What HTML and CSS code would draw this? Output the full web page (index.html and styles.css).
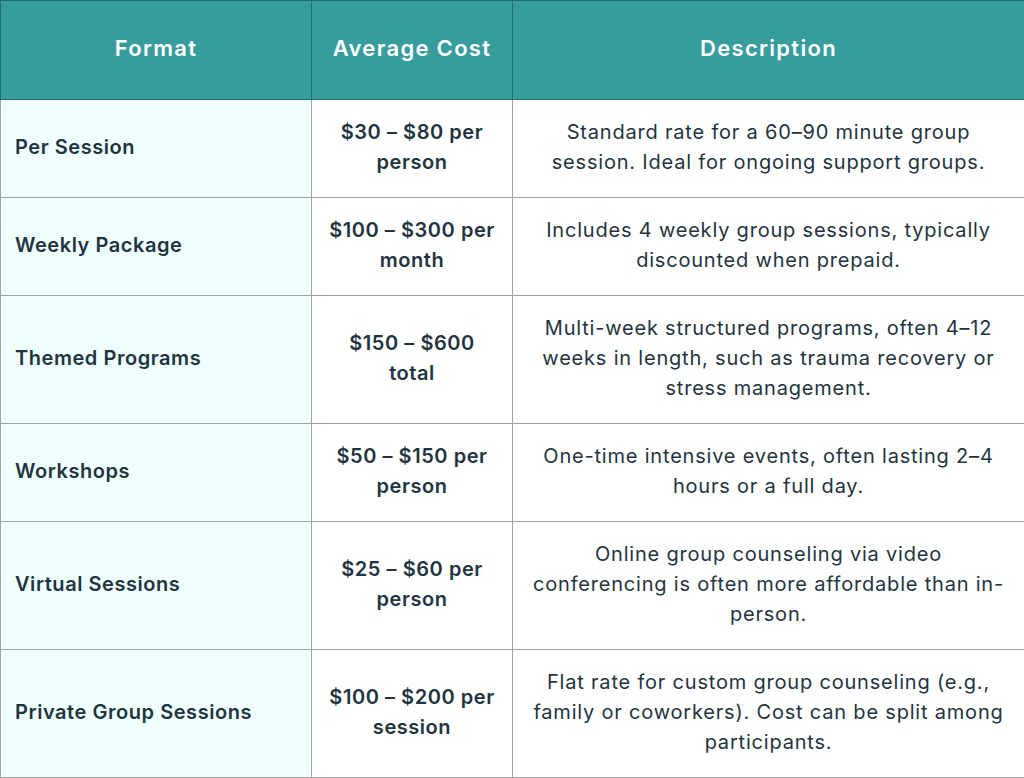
FILE: index.html
```html
<!DOCTYPE html>
<html>
<head>
<meta charset="utf-8">
<link rel="stylesheet" href="styles.css">
</head>
<body>
<table class="cost-table">
  <colgroup>
    <col class="c1"><col class="c2"><col class="c3">
  </colgroup>
  <thead>
    <tr><th>Format</th><th>Average Cost</th><th>Description</th></tr>
  </thead>
  <tbody>
    <tr class="r2"><td class="fmt">Per Session</td><td class="cost">$30 – $80 per person</td><td class="desc">Standard rate for a 60–90 minute group session. Ideal for ongoing support groups.</td></tr>
    <tr class="r2"><td class="fmt">Weekly Package</td><td class="cost">$100 – $300 per month</td><td class="desc">Includes 4 weekly group sessions, typically discounted when prepaid.</td></tr>
    <tr class="r3"><td class="fmt">Themed Programs</td><td class="cost">$150 – $600 total</td><td class="desc">Multi-week structured programs, often 4–12 weeks in length, such as trauma recovery or stress management.</td></tr>
    <tr class="r2"><td class="fmt">Workshops</td><td class="cost">$50 – $150 per person</td><td class="desc">One-time intensive events, often lasting 2–4 hours or a full day.</td></tr>
    <tr class="r3"><td class="fmt">Virtual Sessions</td><td class="cost">$25 – $60 per person</td><td class="desc">Online group counseling via video conferencing is often more affordable than in-person.</td></tr>
    <tr class="r3"><td class="fmt">Private Group Sessions</td><td class="cost">$100 – $200 per session</td><td class="desc">Flat rate for custom group counseling (e.g., family or coworkers). Cost can be split among participants.</td></tr>
  </tbody>
</table>
</body>
</html>
```
FILE: styles.css
```css
html, body {
  margin: 0;
  padding: 0;
  background: #ffffff;
}
.cost-table {
  width: 1024px;
  border-collapse: collapse;
  table-layout: fixed;
  font-family: "Inter", "Liberation Sans", sans-serif;
  font-size: 20px;
  letter-spacing: 0.55px;
  line-height: 30px;
  color: #1f3440;
}
.c1 { width: 311px; }
.c2 { width: 201px; }
.c3 { width: 512px; }
.cost-table th {
  background: #379c9c;
  color: #ffffff;
  font-weight: 600;
  font-size: 22px;
  letter-spacing: 1.3px;
  height: 94px;
  padding: 0 14px 4px;
  border: 1px solid #2a6a6a;
  text-align: center;
  vertical-align: middle;
}
.cost-table td {
  border: 1px solid #a3a3a3;
  padding: 0 14px 3px;
  vertical-align: middle;
}
.r2 td { height: 94px; }
.r3 td { height: 124px; }
.fmt {
  background: #effffd;
  font-weight: 600;
  text-align: left;
  padding-left: 9px;
}
.cost {
  font-weight: 600;
  text-align: center;
}
.desc {
  text-align: center;
  letter-spacing: 0.8px;
}
```
